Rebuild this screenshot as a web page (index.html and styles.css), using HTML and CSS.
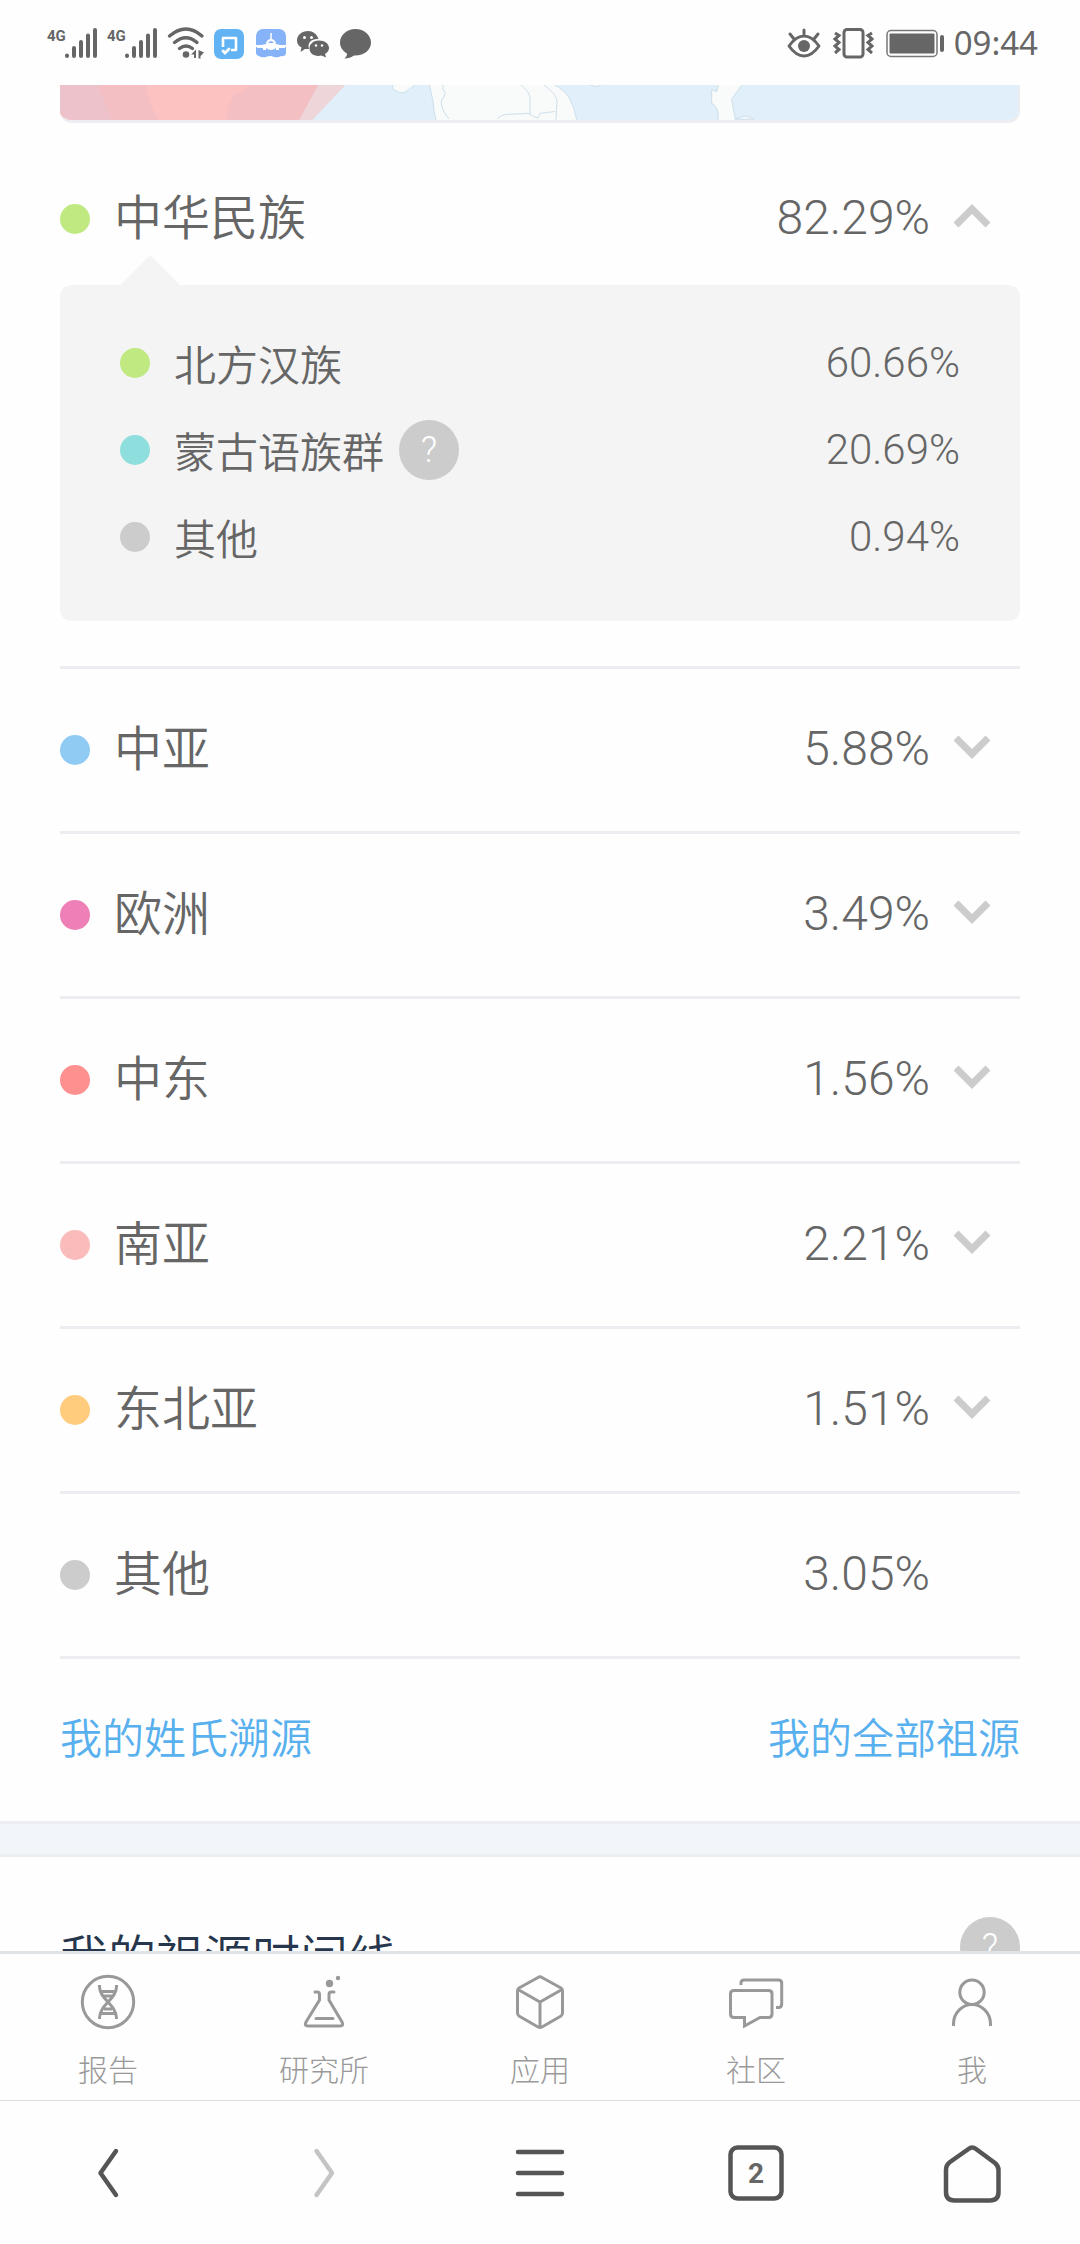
FILE: index.html
```html
<!DOCTYPE html>
<html lang="zh-CN">
<head>
  <meta charset="UTF-8" />
  <meta name="viewport" content="width=device-width, initial-scale=1.0"/>
  <title>我的祖源</title>
  <link rel="stylesheet" href="styles.css">
</head>
<body>
  <header class="status">
    <div class="status-left">
      <svg width="50" height="32" viewBox="0 0 50 32" aria-hidden="true">
        <text class="net" x="-1" y="14">4G</text>
        <path class="bars" d="M19 28.5V29M26 21V29M33 15V29M40 8.5V29M47 3V29"/>
      </svg>
      <svg width="50" height="32" viewBox="0 0 50 32" aria-hidden="true">
        <text class="net" x="-1" y="14">4G</text>
        <path class="bars" d="M19 28.5V29M26 21V29M33 15V29M40 8.5V29M47 3V29"/>
      </svg>
      <svg width="36" height="32" viewBox="0 0 36 32" aria-hidden="true">
        <g fill="none" stroke="#666" stroke-width="3.4" stroke-linecap="round">
          <path d="M1.5 9Q18-5 34 9M6.5 15.5Q18 6 29 15.5M11.5 21.5Q18 16.5 24.5 21.5"/>
        </g>
        <circle cx="18" cy="27.5" r="3.3" fill="#666"/>
        <path d="M23 27.5L28 22.5V31H26V27.5ZM30.5 23V31.5H32.5V29L36 25.5Z" fill="#666"/>
      </svg>
      <svg width="30" height="32" viewBox="0 0 30 32" aria-hidden="true">
        <rect y="2" width="30" height="30" rx="7" fill="#62b3f3"/>
        <path d="M9 20V11H22V23H17" fill="none" stroke="#fff" stroke-width="2.6" stroke-linejoin="round"/>
        <path d="M9 24L11 26L15 22" fill="none" stroke="#fff" stroke-width="2.8" stroke-linecap="round"/>
      </svg>
      <svg width="32" height="32" viewBox="0 0 32 32" aria-hidden="true">
        <path d="M2 18V9a7 7 0 0 1 7-7h16a7 7 0 0 1 7 7v9Z" fill="#86b2f8"/>
        <path d="M2 20H32V27Q30 30 27 29Q24 31 20 30Q16 28 12 30Q6 31 2 27Z" fill="#86b2f8"/>
        <path d="M17 6V13" stroke="#fff" stroke-width="1.5"/>
        <path d="M12 17a5 5 0 0 1 10 0L31 19V21H25V23H22V21Q17 25 12 21V23H9V21H3V19Z" fill="#fff"/>
        <path d="M14 16Q17 12 20 16Z" fill="#86b2f8"/>
      </svg>
      <svg width="34" height="32" viewBox="0 0 34 32" aria-hidden="true">
        <path d="M12 4C6 4 1 8 1 13.5Q1 18 5.500 20.5L4.5 25L9 22H13C11 15 16 11.5 22.5 12C21 7 17 4 12 4Z" fill="#666"/>
        <path d="M23 13.5C17.5 13.5 13.5 17 13.5 21.5C13.5 27 19 30 25.5 28.5L30 30.5L29 27Q33 24.5 33 21C33 17 29 13.5 23 13.5Z" fill="#666"/>
        <g fill="#fff">
          <circle cx="8.5" cy="10.5" r="1.5"/>
          <circle cx="15.5" cy="10.5" r="1.5"/>
          <circle cx="20" cy="18.5" r="1.2"/>
          <circle cx="26" cy="18.5" r="1.2"/>
        </g>
      </svg>
      <svg width="32" height="32" viewBox="0 0 32 32" aria-hidden="true">
        <path d="M15.5 2C7 2 0 8 0 15.5C0 20 2.5 24 7 26.5Q7.5 29 4.5 31.5Q10 31.5 14 28.5C24 29 31 23 31 15.5C31 8 24 2 15.5 2Z" fill="#666"/>
      </svg>
    </div>
    <div class="status-right">
      <svg width="36" height="32" viewBox="0 0 36 32" aria-hidden="true">
        <path d="M2 19Q9 9 17 9T32 19Q25 29 17 29T2 19ZM17 3V8M3 7L7 12M31 7L27 12" fill="none" stroke="#666" stroke-width="3" stroke-linecap="round" stroke-linejoin="round"/>
        <circle cx="17" cy="19" r="6" fill="#666"/>
      </svg>
      <svg width="43" height="32" viewBox="0 0 43 32" aria-hidden="true">
        <rect x="11" y="2.5" width="19" height="27.5" rx="3" fill="none" stroke="#666" stroke-width="3"/>
        <path d="M2 6L6 8.5L2 12L6 15.5L2 19L6 22.5L2 26M39 6L35 8.5L39 12L35 15.5L39 19L35 22.5L39 26" fill="none" stroke="#666" stroke-width="3"/>
      </svg>
      <svg width="58" height="32" viewBox="0 0 58 32" aria-hidden="true">
        <rect x="1" y="3.5" width="50" height="26" rx="4" fill="none" stroke="#777" stroke-width="1.5"/>
        <rect x="3.5" y="6.5" width="45" height="20" rx="1" fill="#666"/>
        <rect x="54" y="8" width="4" height="17" rx="2" fill="#666"/>
      </svg>
      <span class="clock">09:44</span>
    </div>
  </header>

  <main>
    <section class="origin">
      <svg class="map" height="38" viewBox="0 0 960 37" preserveAspectRatio="none" aria-hidden="true">
        <rect width="960" height="37" fill="#e0effa"/>
        <path d="M0 0H259L240 37H0Z" fill="#f3bfc2"/>
        <path d="M0 0H38L52 37H0Z" fill="#eec2ca"/>
        <path d="M86 0H189Q182 9 174 11Q166 26 168 37H99Q87 16 86 0Z" fill="#fcc2c1"/>
        <path d="M259 0H286L253 37H240Z" fill="#edd5d9"/>
        <g fill="#f9fafa" stroke="#cbdeea" stroke-width="1">
          <path d="M334-1H356Q346 10 340 8L333 4Z"/>
          <path d="M370-1H494Q506 5 511 15Q516 25 518 38H377Q374 28 374 18Z"/>
          <path d="M384 0Q382 5 386 8Q386 12 382 17Q382 27 390 36M462 0Q470 7 471 13V31M485 0Q499 11 498 18L497 37M438 36Q442 31 450 31L469 30Q475 34 479 35L481 30L496 28" fill="none"/>
          <path d="M530-1Q537 4 544-1Z"/>
          <path d="M660-1H684L673 15L677 38H659Q662 25 653 19V5L658 7Z"/>
          <path d="M677 36Q687 30 695 36Z"/>
        </g>
      </svg>

      <ul class="groups">
        <li class="group">
          <div class="row">
            <i class="dot green"></i>
            <span class="name">中华民族</span>
            <span class="percent">82.29%</span>
            <button class="toggle" aria-label="收起" aria-expanded="true">
              <svg width="38" height="26" viewBox="0 0 38 26"><path d="M2 22L18 6L34 22"/></svg>
            </button>
          </div>
          <ul class="panel">
            <li class="sub">
              <i class="dot green"></i>
              <span class="name">北方汉族</span>
              <span class="percent">60.66%</span>
            </li>
            <li class="sub">
              <i class="dot cyan"></i>
              <span class="name">蒙古语族群 <button class="help" aria-label="说明">?</button></span>
              <span class="percent">20.69%</span>
            </li>
            <li class="sub">
              <i class="dot grey"></i>
              <span class="name">其他</span>
              <span class="percent">0.94%</span>
            </li>
          </ul>
        </li>
        <li class="group">
          <div class="row">
            <i class="dot blue"></i>
            <span class="name">中亚</span>
            <span class="percent">5.88%</span>
            <button class="toggle" aria-label="展开" aria-expanded="false">
              <svg width="38" height="26" viewBox="0 0 38 26"><path d="M2 4L18 20L34 4"/></svg>
            </button>
          </div>
        </li>
        <li class="group">
          <div class="row">
            <i class="dot pink"></i>
            <span class="name">欧洲</span>
            <span class="percent">3.49%</span>
            <button class="toggle" aria-label="展开" aria-expanded="false">
              <svg width="38" height="26" viewBox="0 0 38 26"><path d="M2 4L18 20L34 4"/></svg>
            </button>
          </div>
        </li>
        <li class="group">
          <div class="row">
            <i class="dot red"></i>
            <span class="name">中东</span>
            <span class="percent">1.56%</span>
            <button class="toggle" aria-label="展开" aria-expanded="false">
              <svg width="38" height="26" viewBox="0 0 38 26"><path d="M2 4L18 20L34 4"/></svg>
            </button>
          </div>
        </li>
        <li class="group">
          <div class="row">
            <i class="dot rose"></i>
            <span class="name">南亚</span>
            <span class="percent">2.21%</span>
            <button class="toggle" aria-label="展开" aria-expanded="false">
              <svg width="38" height="26" viewBox="0 0 38 26"><path d="M2 4L18 20L34 4"/></svg>
            </button>
          </div>
        </li>
        <li class="group">
          <div class="row">
            <i class="dot orange"></i>
            <span class="name">东北亚</span>
            <span class="percent">1.51%</span>
            <button class="toggle" aria-label="展开" aria-expanded="false">
              <svg width="38" height="26" viewBox="0 0 38 26"><path d="M2 4L18 20L34 4"/></svg>
            </button>
          </div>
        </li>
        <li class="group">
          <div class="row last">
            <i class="dot grey"></i>
            <span class="name">其他</span>
            <span class="percent">3.05%</span>
          </div>
        </li>
      </ul>

      <div class="links">
        <a href="#surname">我的姓氏溯源</a>
        <a href="#all">我的全部祖源</a>
      </div>
    </section>

    <section class="timeline">
      <h2>我的祖源时间线</h2>
      <button class="help" aria-label="说明">?</button>
    </section>
  </main>

  <!-- site tabs -->
  <nav class="tabs">
    <a href="#report">
      <svg width="60" height="60" viewBox="0 0 60 60">
        <circle cx="30" cy="30" r="25.7"/>
        <path d="M21.5 13V15C21.5 27 38.5 33 38.5 46V47M38.5 13V15C38.5 27 21.5 33 21.5 46V47M23 19.5H37M26 24H34M26 37H34M23 41.5H37"/>
      </svg>
      报告
    </a>
    <a href="#lab">
      <svg width="60" height="60" viewBox="0 0 60 60">
        <path d="M21 20H23Q25.5 20 25.5 22.5V28L12 50Q10 54 14 54H46Q50 54 48 50L35 28V22.5Q35 20 37.5 20H40M22 46.5H39" stroke-linecap="round"/>
        <circle class="fill" cx="35.5" cy="11.5" r="3.7"/>
        <circle class="fill" cx="44" cy="6" r="2.2"/>
      </svg>
      研究所
    </a>
    <a href="#apps">
      <svg width="60" height="60" viewBox="0 0 60 60">
        <path d="M28 5.5Q30 4 32 5.5L51 16Q52.5 17 52.5 19V41Q52.5 43 51 44L32 55Q30 56 28 55L9 44Q7.5 43 7.5 41V19Q7.5 17 9 16ZM8 17.5L30 30L52 17.5M30 30V55"/>
      </svg>
      应用
    </a>
    <a href="#community">
      <svg width="60" height="60" viewBox="0 0 60 60">
        <path d="M8 18.5H42.5Q46 18.5 46 21.5V42Q46 45.5 42.5 45.5H34L18.5 54V45.5H8Q4.5 45.5 4.5 42V21.5Q4.5 18.5 8 18.5ZM15 13V11Q15 8 18 8H52.5Q55.7 8 55.7 11V32Q55.7 35.5 52.5 35.5H50"/>
      </svg>
      社区
    </a>
    <a href="#me">
      <svg width="60" height="60" viewBox="0 0 60 60">
        <circle cx="30" cy="20.3" r="12.2"/>
        <path d="M11.5 54V52C11.5 41 20 32.5 30 32.5S48.5 41 48.5 52V54"/>
      </svg>
      我
    </a>
  </nav>

  <!-- browser toolbar -->
  <nav class="toolbar">
    <button aria-label="后退"><svg width="60" height="60" viewBox="0 0 60 60"><path d="M38 8L22.5 30L38 52"/></svg></button>
    <button aria-label="前进" disabled><svg width="60" height="60" viewBox="0 0 60 60"><path d="M22.5 8L38 30L22.5 52"/></svg></button>
    <button aria-label="菜单"><svg width="60" height="60" viewBox="0 0 60 60"><path d="M8 9H52M8 30H52M8 51H52"/></svg></button>
    <button aria-label="标签页">
      <svg width="60" height="60" viewBox="0 0 60 60">
        <rect x="4.5" y="4.5" width="51" height="51" rx="7"/>
        <text x="30" y="40">2</text>
      </svg>
    </button>
    <button aria-label="主页"><svg width="60" height="60" viewBox="0 0 60 60"><path d="M26.5 6Q30 3 34 6L53 20Q56.5 23 56.5 27V49Q56.5 57.5 48 57.5H12.5Q4 57.5 4 49V27Q4 22 8 19Z"/></svg></button>
  </nav>
</body>
</html>
```
FILE: styles.css
```css
* {
  box-sizing: border-box;
}

body {
  display: flex;
  flex-direction: column;
  height: 100vh;
  margin: 0;
  background: #fefefe;
  color: #666;
  font-family: Roboto, "Noto Sans CJK SC", sans-serif;
  font-weight: 300;
}

ul {
  list-style: none;
  margin: 0;
  padding: 0;
}

button {
  border: 0;
  padding: 0;
  background: none;
  font: inherit;
  cursor: pointer;
}

svg {
  display: block;
}

/* status bar */
.status {
  display: flex;
  flex: none;
  justify-content: space-between;
  align-items: center;
  height: 85px;
  padding: 0 42px 0 48px;
}

.status svg {
  overflow: visible;
}

.status-left,
.status-right {
  display: flex;
  align-items: center;
  gap: 10px;
}

.net {
  fill: #666;
  font: bold 15px Roboto, sans-serif;
}

.bars {
  stroke: #666;
  stroke-width: 4;
  stroke-linecap: round;
}

.clock {
  font: 400 33px/40px "Noto Sans", sans-serif;
}

/* content */
main {
  flex: 1;
  min-height: 0;
  overflow: hidden;
}

.origin {
  padding: 0 60px;
}

.map {
  width: 100%;
  margin-bottom: 15px;
  border: solid #ebedf0;
  border-width: 0 2px 3px 0;
  border-radius: 0 0 12px 12px;
}

.group {
  border-bottom: 3px solid #ebedf0;
}

.row {
  display: flex;
  align-items: center;
  height: 162px;
  padding-right: 28px;
  font-size: 48px;
}

.row.last {
  padding-right: 90px;
}

.row .name {
  padding-bottom: 10px;
}

.row .percent {
  padding-bottom: 4px;
}

.dot {
  flex: none;
  width: 30px;
  height: 30px;
  margin-right: 24px;
  border-radius: 50%;
}

.green { background: #c0e982; }
.cyan { background: #8fdede; }
.grey { background: #ccc; }
.blue { background: #90cbf3; }
.pink { background: #ee7fb7; }
.red { background: #ff9090; }
.rose { background: #fabcba; }
.orange { background: #ffcb7d; }

.name {
  display: flex;
  flex: 1;
  align-items: center;
  gap: 15px;
  font-weight: 350;
}

.toggle {
  margin-left: 24px;
  padding-bottom: 6px;
}

.toggle path {
  fill: none;
  stroke: #ccc;
  stroke-width: 7;
}

.panel {
  position: relative;
  margin: -15px 0 45px;
  padding: 34px 60px 41px;
  border-radius: 12px;
  background: #f4f4f4;
}

.panel::before {
  content: "";
  position: absolute;
  left: 60px;
  bottom: 100%;
  border: 30px solid transparent;
  border-top: 0;
  border-bottom-color: #f4f4f4;
}

.sub {
  display: flex;
  align-items: center;
  height: 87px;
  font-size: 42px;
}

.help {
  width: 60px;
  height: 60px;
  border-radius: 50%;
  background: #ccc;
  color: #fff;
  font-size: 36px;
  font-weight: 300;
  line-height: 60px;
}

.links {
  display: flex;
  justify-content: space-between;
  align-items: center;
  height: 162px;
  padding-bottom: 10px;
  font-size: 42px;
}

.links a {
  color: #58b0ee;
  font-weight: 350;
  text-decoration: none;
}

/* grey band between sections */
.origin::after {
  content: "";
  display: block;
  height: 30px;
  margin: 0 -60px;
  border: solid #ebedf0;
  border-width: 3px 0;
  background: #f2f6fa;
}

.timeline {
  display: flex;
  justify-content: space-between;
  align-items: flex-start;
  padding: 60px;
}

.timeline h2 {
  margin: 0;
  color: #26364d;
  font-size: 48px;
  font-weight: 350;
  line-height: 84px;
}

/* bottom bars */
.tabs,
.toolbar {
  display: grid;
  flex: none;
  grid-template-columns: repeat(5, 1fr);
  justify-items: center;
}

.tabs {
  height: 150px;
  padding-top: 18px;
  border-top: 3px solid #e0e4e7;
  border-bottom: 1px solid #ddd;
}

.tabs a {
  display: flex;
  flex-direction: column;
  align-items: center;
  gap: 16px;
  color: #999;
  font-size: 30px;
  line-height: 46px;
  text-decoration: none;
}

.tabs svg {
  fill: none;
  stroke: #999;
  stroke-width: 3;
}

.tabs .fill {
  fill: #999;
  stroke: none;
}

.toolbar {
  align-items: center;
  height: 143px;
}

.toolbar svg {
  fill: none;
  stroke: #555;
  stroke-width: 4.5;
  stroke-linecap: round;
  stroke-linejoin: round;
}

.toolbar button:disabled svg {
  stroke: #c4c4c4;
}

.toolbar text {
  fill: #666;
  stroke: none;
  font: bold 28px Roboto, sans-serif;
  text-anchor: middle;
}
```
